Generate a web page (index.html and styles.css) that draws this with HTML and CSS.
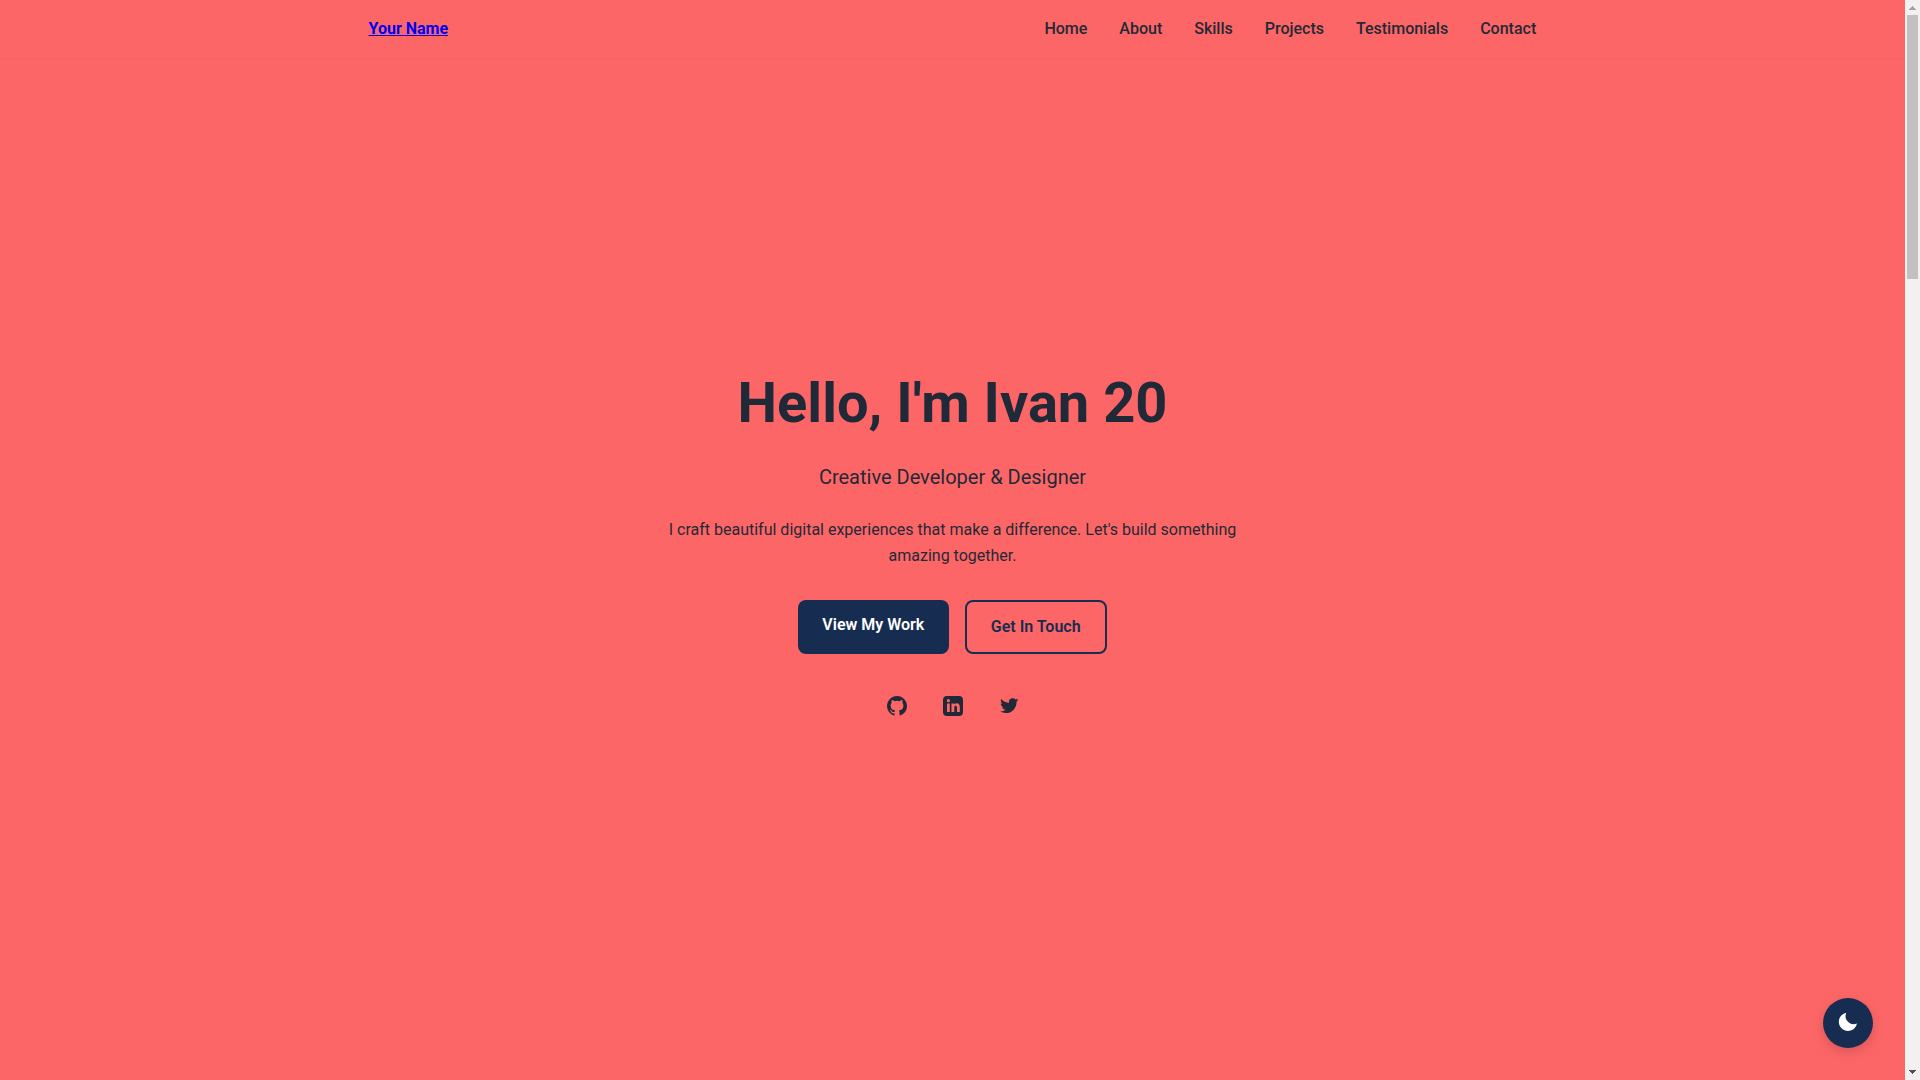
FILE: index.html
```html
<!DOCTYPE html>
<html lang="en">
<head>
  <meta charset="UTF-8" />
  <meta name="viewport" content="width=device-width, initial-scale=1.0" />
  <title>Your Name | Portfolio</title>
  <link rel="stylesheet" href="styles.css">
</head>
<body>
  <!-- Header -->
  <header class="header">
    <nav class="nav container">
      <a href="#" class="nav-logo">Your Name</a>
      <ul class="nav-list">
        <li><a href="#home" class="nav-link">Home</a></li>
        <li><a href="#about" class="nav-link">About</a></li>
        <li><a href="#skills" class="nav-link">Skills</a></li>
        <li><a href="#projects" class="nav-link">Projects</a></li>
        <li><a href="#testimonials" class="nav-link">Testimonials</a></li>
        <li><a href="#contact" class="nav-link">Contact</a></li>
      </ul>
    </nav>
  </header>

  <!-- Hero -->
  <main class="hero" id="home">
    <div class="hero-content">
      <h1 class="hero-title">Hello, I'm Ivan 20</h1>
      <p class="hero-subtitle">Creative Developer &amp; Designer</p>
      <p class="hero-description">I craft beautiful digital experiences that make a difference. Let's build something amazing together.</p>
      <div class="hero-buttons">
        <a href="#projects" class="btn btn-primary">View My Work</a>
        <a href="#contact" class="btn btn-secondary">Get In Touch</a>
      </div>
      <div class="hero-social">
        <a href="#" class="social-link" aria-label="GitHub">
          <svg viewBox="0 0 24 24"><path d="M12.026 2c-5.509 0-9.974 4.465-9.974 9.974 0 4.406 2.857 8.145 6.821 9.465.499.09.679-.217.679-.481 0-.237-.008-.865-.011-1.696-2.775.602-3.361-1.338-3.361-1.338-.452-1.152-1.107-1.459-1.107-1.459-.905-.619.069-.605.069-.605 1.002.07 1.527 1.028 1.527 1.028.89 1.524 2.336 1.084 2.902.829.091-.645.351-1.085.635-1.334-2.214-.251-4.542-1.107-4.542-4.93 0-1.087.389-1.979 1.024-2.675-.101-.253-.446-1.268.099-2.64 0 0 .837-.269 2.742 1.021a9.582 9.582 0 0 1 2.496-.336 9.554 9.554 0 0 1 2.496.336c1.906-1.291 2.742-1.021 2.742-1.021.545 1.372.203 2.387.099 2.64.64.696 1.024 1.587 1.024 2.675 0 3.833-2.33 4.675-4.552 4.922.355.308.675.916.675 1.846 0 1.334-.012 2.41-.012 2.737 0 .267.178.577.687.479C19.146 20.115 22 16.379 22 11.974 22 6.465 17.535 2 12.026 2z"/></svg>
        </a>
        <a href="#" class="social-link" aria-label="LinkedIn">
          <svg viewBox="0 0 24 24"><path fill-rule="evenodd" d="M6 2h12a4 4 0 0 1 4 4v12a4 4 0 0 1-4 4H6a4 4 0 0 1-4-4V6a4 4 0 0 1 4-4zM6 9.5v8.5h2.8V9.5zM7.4 5.1a1.6 1.6 0 1 0 0 3.2 1.6 1.6 0 0 0 0-3.2zM10.5 9.5v8.5h2.8v-4.4c0-1.2.5-1.8 1.4-1.8s1.3.7 1.3 1.8v4.4h2.8v-5c0-2.5-1.1-3.8-3.1-3.8-1.2 0-2 .6-2.4 1.3V9.5z"/></svg>
        </a>
        <a href="#" class="social-link" aria-label="Twitter">
          <svg viewBox="-1.3 -0.5 25.8 25.8"><path d="M19.633 7.997c.013.175.013.349.013.523 0 5.325-4.053 11.461-11.46 11.461-2.282 0-4.402-.661-6.186-1.809.324.037.636.05.973.05a8.07 8.07 0 0 0 5.001-1.721 4.036 4.036 0 0 1-3.767-2.793c.249.037.499.062.761.062.361 0 .724-.05 1.061-.137a4.027 4.027 0 0 1-3.23-3.953v-.05c.537.299 1.16.486 1.82.511a4.022 4.022 0 0 1-1.796-3.354c0-.748.199-1.434.548-2.032a11.457 11.457 0 0 0 8.306 4.215c-.062-.3-.1-.611-.1-.923a4.026 4.026 0 0 1 4.028-4.028c1.16 0 2.207.486 2.943 1.272a7.957 7.957 0 0 0 2.556-.973 4.02 4.02 0 0 1-1.771 2.22 8.073 8.073 0 0 0 2.319-.624 8.645 8.645 0 0 1-2.019 2.083z"/></svg>
        </a>
      </div>
    </div>
  </main>

  <!-- Theme toggle -->
  <button class="theme-toggle" aria-label="Toggle dark mode">
    <svg viewBox="0 0 24 24"><path d="M12 11.807A9.002 9.002 0 0 1 10.049 2a9.942 9.942 0 0 0-5.12 2.735c-3.905 3.905-3.905 10.237 0 14.142 3.906 3.906 10.237 3.905 14.143 0a9.946 9.946 0 0 0 2.735-5.119A9.003 9.003 0 0 1 12 11.807z"/></svg>
  </button>

  <!-- Scrollbar -->
  <div class="scrollbar">
    <svg class="arrow arrow-up" viewBox="0 0 7 4"><path d="M3 0h1v1h1v1h1v1h1v1H0V3h1V2h1V1h1z"/></svg>
    <div class="thumb"></div>
    <svg class="arrow arrow-down" viewBox="0 0 7 4"><path d="M0 0h7v1H6v1H5v1H4v1H3V3H2V2H1V1H0z"/></svg>
  </div>
</body>
</html>
```

FILE: styles.css
```css
:root {
  --primary: #172c51;
  --bg: #fd6666;
  --text: #1f2937;
  --scrollbar-width: 15px;
}

* {
  margin: 0;
  padding: 0;
  box-sizing: border-box;
}

body {
  font-family: Roboto, sans-serif;
  font-size: 16px;
  line-height: 1.6;
  color: var(--text);
  background: var(--bg);
  height: 100vh;
  padding-right: var(--scrollbar-width);
  overflow: hidden;
}

.container {
  max-width: 1200px;
  margin: 0 auto;
  padding: 0 1rem;
}

/* Header */
.header {
  box-shadow: 0 1px 3px rgba(0, 0, 0, 0.05);
}

.nav {
  display: flex;
  justify-content: space-between;
  align-items: center;
  padding: 1rem;
}

.nav-logo {
  font-weight: 700;
  color: #0000ee;
}

.nav-list {
  display: flex;
  gap: 2rem;
  padding-right: 0.3px;
  list-style: none;
}

.nav-link {
  color: var(--text);
  font-weight: 500;
  text-decoration: none;
}

/* Hero */
.hero {
  display: flex;
  justify-content: center;
  padding-top: 312.4px;
}

.hero-content {
  max-width: 600px;
  text-align: center;
}

.hero-title {
  font-size: 3.5rem;
  font-weight: 700;
  line-height: 1.2;
  margin-bottom: 1.5rem;
}

.hero-subtitle {
  font-size: 1.25rem;
  margin-bottom: 1.5rem;
}

.hero-description {
  margin-bottom: 2rem;
}

.hero-buttons {
  display: flex;
  justify-content: center;
  gap: 1rem;
  margin-bottom: 2.5rem;
}

.btn {
  padding: 0.75rem 1.515rem;
  border-radius: 8px;
  font-weight: 600;
  text-decoration: none;
}

.btn-primary {
  background: var(--primary);
  color: #ffffff;
}

.btn-secondary {
  border: 2px solid var(--primary);
  color: var(--primary);
}

.hero-social {
  display: flex;
  justify-content: center;
  gap: 2rem;
}

.social-link {
  display: flex;
  color: var(--text);
}

.social-link svg {
  width: 24px;
  height: 24px;
  fill: currentColor;
}

/* Theme toggle */
.theme-toggle {
  position: fixed;
  right: calc(2rem + var(--scrollbar-width));
  bottom: 2rem;
  width: 50px;
  height: 50px;
  display: flex;
  align-items: center;
  justify-content: center;
  border: none;
  border-radius: 50%;
  background: var(--primary);
  color: #ffffff;
  box-shadow: 0 4px 12px rgba(0, 0, 0, 0.15);
  cursor: pointer;
}

.theme-toggle svg {
  width: 22px;
  height: 22px;
  margin-bottom: 2px;
  fill: currentColor;
}

/* Scrollbar */
.scrollbar {
  position: fixed;
  top: 0;
  right: 0;
  width: var(--scrollbar-width);
  height: 100vh;
  display: flex;
  flex-direction: column;
  align-items: center;
  background: #f1f1f1;
}

.thumb {
  width: 11px;
  height: 264px;
  margin-top: 5px;
  background: #c1c1c1;
}

.arrow {
  width: 7px;
  height: 4px;
}

.arrow-up {
  margin-top: 6px;
  fill: #a3a3a3;
}

.arrow-down {
  margin-top: auto;
  margin-bottom: 6px;
  fill: #505050;
}
```
